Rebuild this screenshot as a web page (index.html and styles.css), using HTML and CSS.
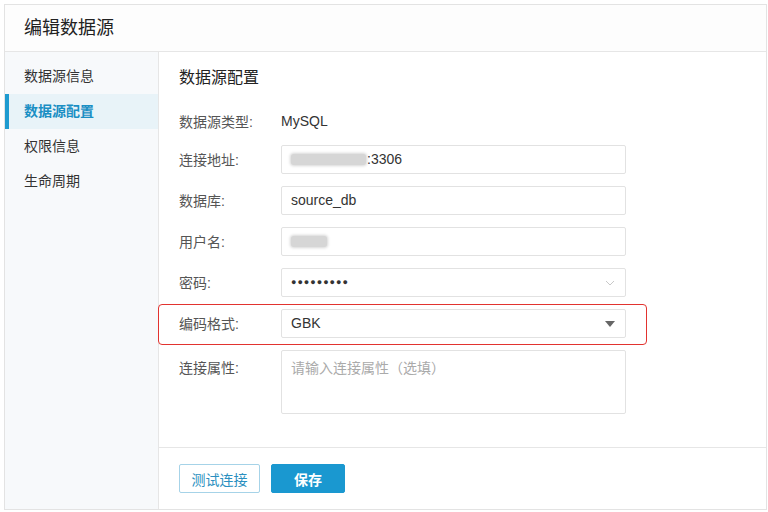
FILE: index.html
```html
<!DOCTYPE html>
<html lang="zh-CN">
<head>
  <meta charset="UTF-8">
  <title>编辑数据源</title>
  <link rel="stylesheet" href="styles.css">
</head>
<body>
  <div class="panel">
    <div class="panel-head">编辑数据源</div>
    <div class="panel-body">
      <ul class="menu">
        <li>数据源信息</li>
        <li class="active">数据源配置</li>
        <li>权限信息</li>
        <li>生命周期</li>
      </ul>
      <div class="main">
        <div class="form">
          <h2>数据源配置</h2>
          <div class="row row-text">
            <label>数据源类型:</label>
            <span class="value">MySQL</span>
          </div>
          <div class="row">
            <label>连接地址:</label>
            <div class="field"><span class="blur blur-long"></span>:3306</div>
          </div>
          <div class="row">
            <label>数据库:</label>
            <div class="field">source_db</div>
          </div>
          <div class="row">
            <label>用户名:</label>
            <div class="field"><span class="blur blur-short"></span></div>
          </div>
          <div class="row">
            <label>密码:</label>
            <div class="field dots">●●●●●●●●●
              <svg class="chevron" width="10" height="6" viewBox="0 0 10 6"><path d="M1 1l4 4 4-4" fill="none" stroke="#c8c8c8" stroke-width="1"/></svg>
            </div>
          </div>
          <div class="row highlight">
            <label>编码格式:</label>
            <div class="field">GBK
              <svg class="caret" width="10" height="6" viewBox="0 0 10 6"><path d="M0 0h10L5 6z" fill="#666"/></svg>
            </div>
          </div>
          <div class="row row-area">
            <label>连接属性:</label>
            <div class="field area">请输入连接属性（选填）</div>
          </div>
        </div>
        <div class="footer">
          <button class="btn btn-line">测试连接</button>
          <button class="btn btn-primary">保存</button>
        </div>
      </div>
    </div>
  </div>
</body>
</html>
```

FILE: styles.css
```css
body {
  margin: 0;
  background: #fff;
  font-family: "Liberation Sans", "Noto Sans CJK SC", sans-serif;
  color: #333;
}
.panel {
  margin: 4px 1px 1px 4px;
  height: 504px;
  border: 1px solid #e3e3e3;
  display: flex;
  flex-direction: column;
}
.panel-head {
  height: 46px;
  line-height: 46px;
  padding-left: 19px;
  font-size: 18px;
  color: #222;
  border-bottom: 1px solid #e6e6e6;
  background: #fdfdfd;
}
.panel-body {
  flex: 1;
  display: flex;
}
.menu {
  list-style: none;
  margin: 0;
  padding: 7px 0 0;
  width: 153px;
  background: #f7f9fb;
  border-right: 1px solid #e6e6e6;
}
.menu li {
  height: 35px;
  line-height: 35px;
  padding-left: 19px;
  font-size: 14px;
  color: #333;
}
.menu li.active {
  background: #e8f3f8;
  color: #1a8fc4;
  border-left: 4px solid #1e9bd0;
  padding-left: 15px;
  font-weight: bold;
}
.main {
  flex: 1;
  display: flex;
  flex-direction: column;
}
.form {
  flex: 1;
  padding: 15px 0 0 20px;
  border-bottom: 1px solid #e6e6e6;
}
.form h2 {
  margin: 0 0 18px;
  font-size: 16px;
  line-height: 22px;
  font-weight: normal;
  color: #222;
}
.row {
  display: flex;
  align-items: center;
  height: 28px;
  margin-bottom: 13px;
  position: relative;
}
.row-text {
  margin-bottom: 10px;
}
.row label {
  width: 102px;
  font-size: 14px;
  color: #555;
}
.value {
  font-size: 14px;
  color: #333;
}
.field {
  width: 334px;
  height: 27px;
  line-height: 27px;
  padding-left: 9px;
  border: 1px solid #e2e2e2;
  border-radius: 2px;
  background: #fff;
  font-size: 14px;
  color: #333;
  position: relative;
  display: flex;
  align-items: center;
}
.dots {
  font-size: 9px;
  letter-spacing: 1px;
}
.blur {
  display: inline-block;
  height: 11px;
  background: #d6d6d6;
  box-shadow: 0 0 3px 1px #d6d6d6;
  border-radius: 3px;
}
.blur-long {
  width: 75px;
  margin-right: 1px;
}
.blur-short {
  width: 36px;
}
.chevron, .caret {
  position: absolute;
  right: 10px;
  top: 11px;
}
.highlight::before {
  content: "";
  position: absolute;
  left: -21px;
  top: -5px;
  width: 487px;
  height: 39px;
  border: 1px solid #e2332f;
  border-radius: 4px;
}
.row-area {
  align-items: flex-start;
  height: auto;
}
.row-area label {
  margin-top: 7px;
}
.area {
  height: 62px;
  align-items: flex-start;
  line-height: 34px;
  color: #aaa;
}
.footer {
  height: 61px;
  display: flex;
  align-items: center;
  gap: 11px;
  padding-left: 20px;
}
.btn {
  height: 29px;
  font-family: inherit;
  font-size: 14px;
  border-radius: 2px;
  cursor: pointer;
}
.btn-line {
  width: 81px;
  background: #fff;
  border: 1px solid #a6d3e8;
  color: #2a8fc0;
}
.btn-primary {
  width: 74px;
  background: #1a98d0;
  border: 1px solid #1a98d0;
  color: #fff;
  font-weight: bold;
}
```
